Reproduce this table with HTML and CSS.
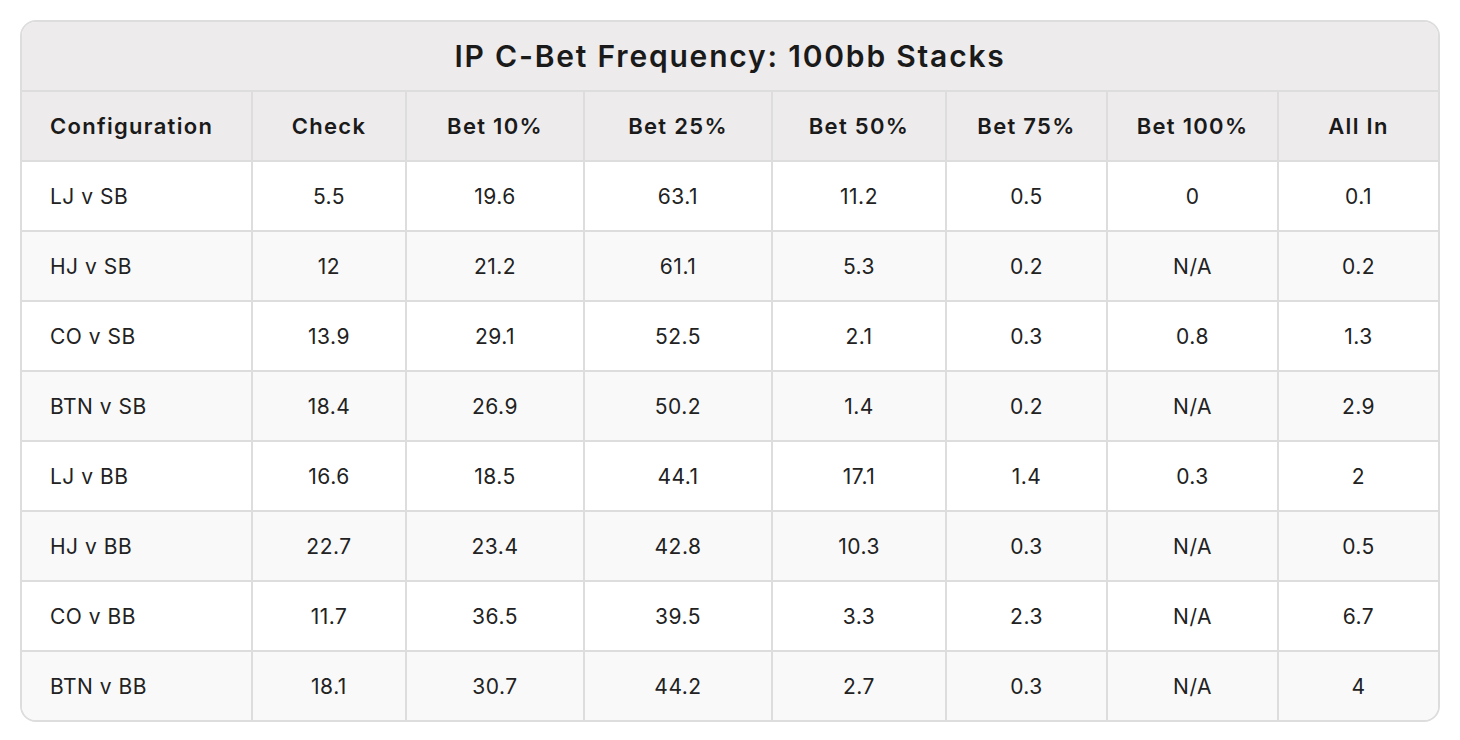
FILE: index.html
```html
<!DOCTYPE html>
<html lang="en">
<head>
<meta charset="utf-8">
<title>IP C-Bet Frequency: 100bb Stacks</title>
<link rel="stylesheet" href="styles.css">
</head>
<body>
<div class="page">
  <div class="card">
    <table class="freq">
      <colgroup>
        <col class="c-config">
        <col class="c-check">
        <col class="c-b10">
        <col class="c-b25">
        <col class="c-b50">
        <col class="c-b75">
        <col class="c-b100">
        <col class="c-allin">
      </colgroup>
      <thead>
        <tr class="title-row"><th colspan="8" class="title">IP C-Bet Frequency: 100bb Stacks</th></tr>
        <tr class="head-row">
          <th class="first">Configuration</th>
          <th>Check</th>
          <th>Bet 10%</th>
          <th>Bet 25%</th>
          <th>Bet 50%</th>
          <th>Bet 75%</th>
          <th>Bet 100%</th>
          <th class="last">All In</th>
        </tr>
      </thead>
      <tbody>
        <tr><td class="first">LJ v SB</td><td>5.5</td><td>19.6</td><td>63.1</td><td>11.2</td><td>0.5</td><td>0</td><td class="last">0.1</td></tr>
        <tr><td class="first">HJ v SB</td><td>12</td><td>21.2</td><td>61.1</td><td>5.3</td><td>0.2</td><td>N/A</td><td class="last">0.2</td></tr>
        <tr><td class="first">CO v SB</td><td>13.9</td><td>29.1</td><td>52.5</td><td>2.1</td><td>0.3</td><td>0.8</td><td class="last">1.3</td></tr>
        <tr><td class="first">BTN v SB</td><td>18.4</td><td>26.9</td><td>50.2</td><td>1.4</td><td>0.2</td><td>N/A</td><td class="last">2.9</td></tr>
        <tr><td class="first">LJ v BB</td><td>16.6</td><td>18.5</td><td>44.1</td><td>17.1</td><td>1.4</td><td>0.3</td><td class="last">2</td></tr>
        <tr><td class="first">HJ v BB</td><td>22.7</td><td>23.4</td><td>42.8</td><td>10.3</td><td>0.3</td><td>N/A</td><td class="last">0.5</td></tr>
        <tr><td class="first">CO v BB</td><td>11.7</td><td>36.5</td><td>39.5</td><td>3.3</td><td>2.3</td><td>N/A</td><td class="last">6.7</td></tr>
        <tr class="last-row"><td class="first">BTN v BB</td><td>18.1</td><td>30.7</td><td>44.2</td><td>2.7</td><td>0.3</td><td>N/A</td><td class="last">4</td></tr>
      </tbody>
    </table>
  </div>
</div>
</body>
</html>
```

FILE: styles.css
```css
html, body {
  margin: 0;
  padding: 0;
  background: #ffffff;
}

body {
  font-family: "Inter", "Noto Sans", "Liberation Sans", sans-serif;
  color: #1b1b1b;
}

.page {
  padding: 20px;
}

.card {
  width: 1420px;
  box-sizing: border-box;
  border: 2px solid #dddddd;
  border-radius: 16px;
  overflow: hidden;
  background: #ffffff;
}

.freq {
  width: 100%;
  border-collapse: separate;
  border-spacing: 0;
  table-layout: fixed;
}

.c-config { width: 231px; }
.c-check { width: 154px; }
.c-b10 { width: 178px; }
.c-b25 { width: 188px; }
.c-b50 { width: 174px; }
.c-b75 { width: 161px; }
.c-b100 { width: 171px; }
.c-allin { width: 159px; }

.freq th,
.freq td {
  height: 68px;
  padding: 0;
  box-sizing: content-box;
  text-align: center;
  vertical-align: middle;
  border-right: 2px solid #dddddd;
  border-bottom: 2px solid #dddddd;
}

.freq .last {
  border-right: none;
}

.freq .last-row td {
  border-bottom: none;
}

.title-row th {
  height: 68px;
  border-right: none;
  background: #edebec;
  font-size: 30px;
  font-weight: 600;
  letter-spacing: 1.8px;
  color: #1a1a1a;
}

.head-row th {
  background: #edebec;
  font-size: 22px;
  font-weight: 600;
  letter-spacing: 1.3px;
  color: #1a1a1a;
}

.freq .first {
  text-align: left;
  padding-left: 28px;
}

.freq td {
  font-size: 21px;
  font-weight: 400;
  letter-spacing: 0.5px;
  color: #222222;
}

.freq tbody tr:nth-child(even) td {
  background: #f9f9f9;
}
```
